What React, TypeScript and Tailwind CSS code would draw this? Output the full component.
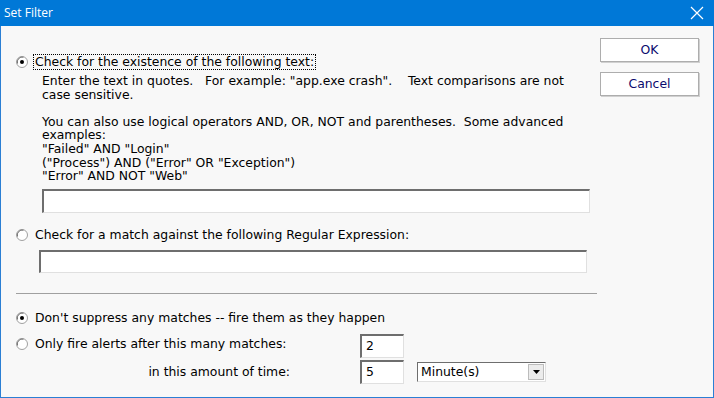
import React from "react";

const font = { fontFamily: '"DejaVu Sans", Verdana, sans-serif' };

function Radio({ checked }: { checked?: boolean }) {
  return (
    <svg width="12" height="12" viewBox="0 0 12 12" className="shrink-0">
      <circle cx="6" cy="6" r="5.5" fill="#ffffff" stroke="#a0a0a0" strokeWidth="1" />
      <path d="M1.5 7.5 A5 5 0 0 1 7.5 1.2" fill="none" stroke="#707070" strokeWidth="1" />
      {checked && <circle cx="6" cy="6" r="2" fill="#000000" />}
    </svg>
  );
}

function TextBox({ className, value }: { className?: string; value?: string }) {
  return (
    <div
      className={
        "bg-white border-t-2 border-l-2 border-t-[#6e6e6e] border-l-[#6e6e6e] border-b border-r border-b-[#e0e0e0] border-r-[#e0e0e0] flex items-center px-[4px] text-black " +
        (className || "")
      }
    >
      {value}
    </div>
  );
}

export default function App() {
  return (
    <div className="w-[714px] h-[398px] flex flex-col text-black" style={font}>
      <div className="h-[26px] bg-[#0078d7] flex items-center justify-between pl-[4px] pr-[10px]">
        <span className="text-white text-[12px]" style={{ fontFamily: '"Open Sans", "Noto Sans", sans-serif' }}>
          Set Filter
        </span>
        <svg width="14" height="14" viewBox="0 0 14 14">
          <path d="M1 1 L13 13 M13 1 L1 13" stroke="#ffffff" strokeWidth="1.2" />
        </svg>
      </div>
      <div className="flex-1 flex bg-[#f8f8f8] border-x border-b border-[#2b7fd4]">
        <div className="w-[598px] pl-[15px] flex flex-col text-[12.4px] leading-[13.6px]">
          <div className="flex items-center mt-[28px] h-[16px]">
            <Radio checked />
            <span className="ml-[5px] border border-dotted border-black px-[1px]">
              Check for the existence of the following text:
            </span>
          </div>
          <div className="ml-[26px] mt-[4px] w-[570px] whitespace-nowrap">
            Enter the text in quotes.&nbsp;&nbsp; For example: "app.exe crash".&nbsp;&nbsp;&nbsp; Text comparisons are not
            <br />
            case sensitive.
            <br />
            <br />
            You can also use logical operators AND, OR, NOT and parentheses.&nbsp; Some advanced
            <br />
            examples:
            <br />
            "Failed" AND "Login"
            <br />
            ("Process") AND ("Error" OR "Exception")
            <br />
            "Error" AND NOT "Web"
          </div>
          <TextBox className="ml-[26px] mt-[6px] w-[548px] h-[24px]" />
          <div className="flex items-center mt-[15px] h-[14px]">
            <Radio />
            <span className="ml-[7px]">Check for a match against the following Regular Expression:</span>
          </div>
          <TextBox className="ml-[23px] mt-[8px] w-[548px] h-[23px]" />
          <div className="mt-[20px] w-[581px] h-px bg-[#a0a0a0]" />
          <div className="flex items-center mt-[17px] h-[14px]">
            <Radio checked />
            <span className="ml-[7px]">Don't suppress any matches -- fire them as they happen</span>
          </div>
          <div className="flex mt-[9px]">
            <div className="w-[344px] flex items-center h-[20px]">
              <Radio />
              <span className="ml-[7px]">Only fire alerts after this many matches:</span>
            </div>
            <TextBox className="w-[44px] h-[24px]" value="2" />
          </div>
          <div className="flex items-center mt-[2px]">
            <div className="w-[344px] pr-[70px] flex items-center justify-end">in this amount of time:</div>
            <TextBox className="w-[44px] h-[24px]" value="5" />
            <div className="ml-[13px] w-[129px] h-[20px] bg-white border border-t-[#6e6e6e] border-l-[#6e6e6e] border-b-[#e0e0e0] border-r-[#e0e0e0] flex items-center">
              <span className="flex-1 pl-[3px]">Minute(s)</span>
              <div className="w-[16px] h-[16px] mr-[1px] bg-[#ececec] border border-[#bcbcbc] flex items-center justify-center">
                <svg width="7" height="4" viewBox="0 0 7 4">
                  <path d="M0 0 H7 L3.5 4 Z" fill="#000" />
                </svg>
              </div>
            </div>
          </div>
        </div>
        <div className="flex flex-col pt-[12px] pl-[1px]">
          <button className="w-[99px] h-[24px] bg-white border border-[#adadad] text-[12.4px] text-[#0a0a6e] shadow-[1px_1px_0_#d0d0d0]">
            OK
          </button>
          <button className="w-[99px] h-[24px] mt-[10px] bg-white border border-[#adadad] text-[12.4px] text-[#0a0a6e] shadow-[1px_1px_0_#d0d0d0]">
            Cancel
          </button>
        </div>
      </div>
    </div>
  );
}
